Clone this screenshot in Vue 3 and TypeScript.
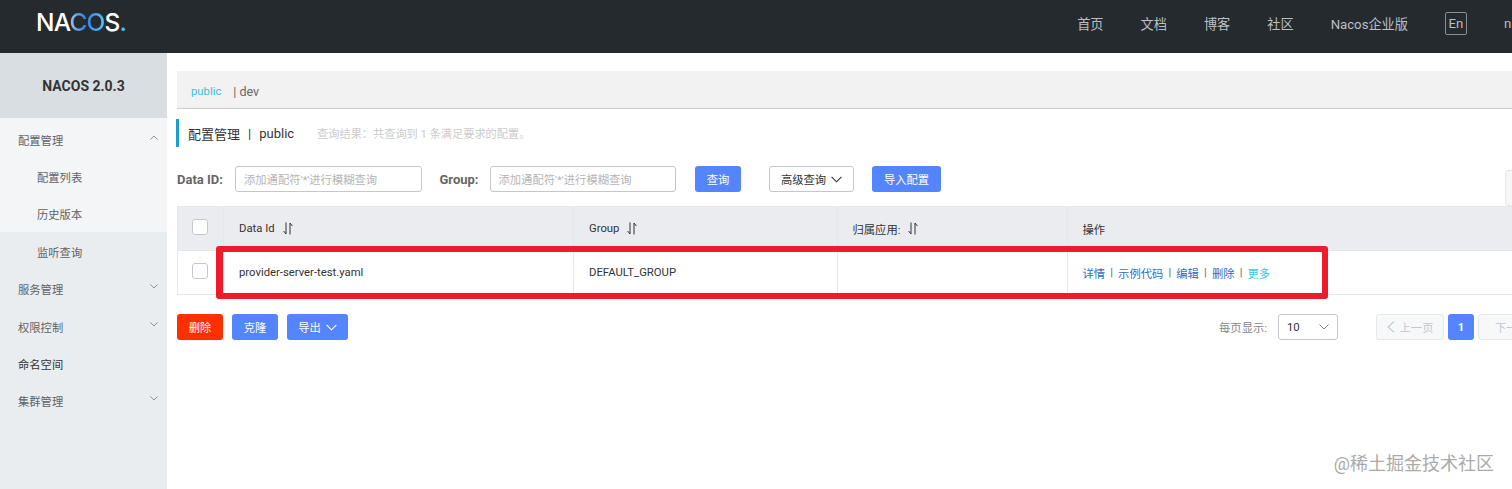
<script setup lang="ts">
// 顶部导航
const navItems = ['首页', '文档', '博客', '社区', 'Nacos企业版']

interface MenuItem {
  label: string
  arrow?: 'up' | 'down'
  dark?: boolean
}

const columns = [
  { label: 'Data Id', cls: 'col-id', sort: true },
  { label: 'Group', cls: 'col-group', sort: true },
  { label: '归属应用:', cls: 'col-app', sort: true },
  { label: '操作', cls: 'col-op', sort: false },
]

const actions = ['详情', '示例代码', '编辑', '删除']
const subItems = ['配置列表', '历史版本', '监听查询']
const lowerMenu: MenuItem[] = [
  { label: '服务管理', arrow: 'down' },
  { label: '权限控制', arrow: 'down' },
  { label: '命名空间', dark: true },
  { label: '集群管理', arrow: 'down' },
]
</script>

<template>
  <div class="page">
    <header class="topbar">
      <div class="logo">NA<span class="logo-mark">CO</span>S<span class="logo-dot">.</span></div>
      <nav class="nav">
        <span v-for="item in navItems" :key="item" class="nav-item">{{ item }}</span>
        <span class="lang">En</span>
        <span class="user">na</span>
      </nav>
    </header>

    <div class="body">
      <aside class="sidebar">
        <div class="side-title">NACOS 2.0.3</div>
        <div class="side-open">
          <div class="menu-row">
            <span>配置管理</span>
            <svg class="chev" width="8" height="5" viewBox="0 0 8 5"><path d="M.4 4.600 4 1l3.600 3.600" /></svg>
          </div>
          <div v-for="item in subItems" :key="item" class="menu-sub">{{ item }}</div>
        </div>
        <div v-for="item in lowerMenu" :key="item.label" class="menu-row" :class="{ dark: item.dark }">
          <span>{{ item.label }}</span>
          <svg v-if="item.arrow" class="chev" width="8" height="5" viewBox="0 0 8 5"><path d="M.4.400 4 4 7.600.400" /></svg>
        </div>
      </aside>

      <main class="main">
        <div class="ns-bar">
          <span class="ns-active">public</span>
          <span class="ns-other">| dev</span>
        </div>

        <div class="heading">
          <span class="heading-title">配置管理</span>
          <span class="heading-sep">|</span>
          <span class="heading-ns">public</span>
          <span class="heading-desc">查询结果：共查询到 1 条满足要求的配置。</span>
        </div>

        <div class="filters">
          <label class="filter-label">Data ID:</label>
          <div class="input">添加通配符'*'进行模糊查询</div>
          <label class="filter-label group-label">Group:</label>
          <div class="input">添加通配符'*'进行模糊查询</div>
          <button class="btn primary query">查询</button>
          <button class="btn outline advanced">
            高级查询
            <svg class="btn-chev" width="11" height="7" viewBox="0 0 11 7"><path d="M.6.800 5.500 5.800 10.400.800" /></svg>
          </button>
          <button class="btn primary import">导入配置</button>
          <span class="stub"></span>
        </div>

        <div class="table-wrap">
          <div class="t-row t-head">
            <div class="cell col-check"><span class="check"></span></div>
            <div v-for="col in columns" :key="col.label" class="cell" :class="col.cls">
              {{ col.label }}
              <svg v-if="col.sort" class="sort" width="10" height="13" viewBox="0 0 10 13">
                <path d="M3 .500v11.500M3 12 .6 9M7 12.500V1M7 1l2.400 3" />
              </svg>
            </div>
          </div>
          <div class="t-row t-data">
            <div class="cell col-check"><span class="check"></span></div>
            <div class="cell col-id">provider-server-test.yaml</div>
            <div class="cell col-group">DEFAULT_GROUP</div>
            <div class="cell col-app"></div>
            <div class="cell col-op">
              <template v-for="a in actions" :key="a">
                <a class="link">{{ a }}</a><span class="op-sep">|</span>
              </template>
              <a class="link more">更多</a>
            </div>
          </div>
          <div class="highlight"></div>
        </div>

        <div class="footer">
          <button class="btn danger">删除</button>
          <button class="btn primary clone">克隆</button>
          <button class="btn primary export">
            导出
            <svg class="btn-chev" width="11" height="7" viewBox="0 0 11 7"><path d="M.6.800 5.500 5.800 10.400.800" /></svg>
          </button>
          <div class="pager">
            <span class="page-label">每页显示:</span>
            <div class="page-size">
              <span>10</span>
              <svg class="size-chev" width="10" height="6" viewBox="0 0 10 6"><path d="M.5.500 5 5 9.500.500" /></svg>
            </div>
            <button class="btn pg prev">
              <svg width="8" height="12" viewBox="0 0 8 12"><path d="M7 .6 1 6l6 5.400" /></svg>
              上一页
            </button>
            <button class="btn primary pg-num">1</button>
            <button class="btn pg next">下一页</button>
          </div>
        </div>
      </main>
    </div>

    <div class="watermark">@稀土掘金技术社区</div>
  </div>
</template>

<style>
html,
body {
  margin: 0;
  overflow: hidden;
}
</style>

<style scoped>
.page {
  position: relative;
  width: 1512px;
  height: 489px;
  overflow: hidden;
  background: #fff;
  font-family: Roboto, "Noto Sans CJK SC", sans-serif;
  font-size: 11.300px;
  color: #333;
}

.topbar {
  display: flex;
  justify-content: space-between;
  height: 53px;
  background: #252a2f;
  padding-left: 36px;
}

.logo {
  margin-top: 7px;
  font-family: Inter, sans-serif;
  font-size: 24.500px;
  font-weight: 500;
  letter-spacing: -0.800px;
  color: #fff;
}

.logo-mark {
  background: linear-gradient(90deg, #9cc4f2, #2f80e4 45%, #55c8ef);
  -webkit-background-clip: text;
  background-clip: text;
  color: transparent;
}

.logo-dot {
  color: #47c5e8;
}

.nav {
  display: flex;
  align-items: center;
  height: 46px;
  margin-right: -4px;
  color: #bcbfc2;
  font-size: 13.200px;
}

.nav-item {
  margin-right: 37px;
}

.lang {
  display: flex;
  align-items: center;
  justify-content: center;
  width: 22px;
  height: 23px;
  box-sizing: border-box;
  border: 1px solid #8a8e92;
  border-radius: 2px;
  margin-right: 37px;
}

.user {
  width: 12px;
  overflow: hidden;
}

.body {
  display: flex;
  height: 436px;
}

.sidebar {
  flex: none;
  width: 167px;
  background: #eaedf0;
  color: #5f6368;
}

.side-title {
  display: flex;
  align-items: center;
  justify-content: center;
  height: 65px;
  background: #d9dee3;
  color: #333;
  font-size: 14px;
  font-weight: 700;
}

.side-open {
  padding-top: 3px;
  background: linear-gradient(#f3f5f7 114px, #eaedf0 114px);
}

.menu-row {
  display: flex;
  align-items: center;
  justify-content: space-between;
  height: 37.400px;
  padding: 0 9px 0 18px;
}

.menu-row .chev {
  margin-top: -5px;
}

.menu-row.dark {
  color: #333;
}

.menu-sub {
  display: flex;
  align-items: center;
  height: 37.400px;
  padding-left: 37px;
}

.chev {
  fill: none;
  stroke: #8c9196;
  stroke-width: 1;
}

.main {
  flex: none;
  width: 1440px;
  padding: 18px 0 0 10px;
  box-sizing: border-box;
}

.ns-bar {
  display: flex;
  align-items: center;
  height: 38px;
  padding: 3px 0 0 14px;
  background: #f2f2f2;
  border-bottom: 1px solid #ccc;
  box-sizing: border-box;
}

.ns-active {
  color: #3bbfd9;
  margin-right: 12px;
}

.ns-other {
  font-size: 12.500px;
  color: #666;
}

.heading {
  display: flex;
  align-items: center;
  height: 28px;
  margin-top: 10px;
  margin-left: -1px;
  padding-left: 9px;
  border-left: 3px solid #209bd0;
}

.heading-title,
.heading-ns {
  font-size: 13px;
  color: #333;
}

.heading-sep {
  margin: 0 8px;
  font-size: 13px;
  color: #333;
}

.heading-desc {
  margin-left: 23px;
  font-size: 11.200px;
  color: #ccc;
}

.filters {
  display: flex;
  align-items: center;
  height: 26px;
  margin-top: 19px;
}

.filter-label {
  flex: none;
  width: 47px;
  margin-right: 11px;
  font-size: 13px;
  font-weight: 700;
  color: #666;
  white-space: nowrap;
}

.group-label {
  width: 39px;
  margin-left: 18px;
}

.input {
  display: flex;
  align-items: center;
  width: 186.500px;
  height: 26px;
  box-sizing: border-box;
  padding-left: 8px;
  border: 1px solid #c4c6cf;
  border-radius: 3px;
  color: #b5b5b5;
  white-space: nowrap;
}

.btn {
  display: inline-flex;
  align-items: center;
  justify-content: center;
  gap: 5px;
  height: 26px;
  padding: 0;
  border: 0;
  border-radius: 3px;
  font-family: inherit;
  font-size: 11.300px;
}

.primary {
  background: #5584ff;
  color: #fff;
}

.danger {
  width: 46px;
  background: #ff3000;
  color: #fff;
}

.outline {
  background: #fff;
  border: 1px solid #c4c6cf;
  color: #333;
}

.btn-chev {
  fill: none;
  stroke: currentColor;
  stroke-width: 1.100;
}

.query {
  width: 46px;
  margin-left: 19px;
}

.advanced {
  width: 85px;
  margin-left: 28px;
}

.import {
  width: 69px;
  margin-left: 18px;
}

.stub {
  flex: none;
  align-self: flex-start;
  width: 20px;
  height: 34px;
  margin: 4px 0 0 564px;
  background: #f7f7f7;
  border: 1px solid #e6e7eb;
  border-radius: 3px;
}

.table-wrap {
  position: relative;
  margin-top: 14px;
  width: 1500px;
  border: 1px solid #e6e7eb;
  box-sizing: border-box;
}

.t-row {
  display: flex;
}

.t-head {
  height: 43px;
  background: #ebecf0;
}

.t-data {
  height: 44px;
  border-top: 1px solid #e6e7eb;
  box-sizing: border-box;
}

.cell {
  display: flex;
  align-items: center;
  gap: 8px;
  box-sizing: border-box;
  padding-left: 15px;
  border-left: 1px solid #e6e7eb;
}

.col-check {
  width: 45px;
  justify-content: center;
  padding: 0 2px 0 0;
  border-left: 0;
}

.col-id {
  width: 350px;
}

.col-group {
  width: 263.500px;
}

.col-app {
  width: 230px;
}

.col-op {
  flex: 1;
  gap: 0;
}

.check {
  width: 14px;
  height: 14px;
  margin-bottom: 4px;
  background: #fff;
  border: 1px solid #c4c6cf;
  border-radius: 3px;
}

.sort {
  fill: none;
  stroke: #333;
  stroke-width: 1;
}

.link {
  color: #2a6fc9;
}

.link.more {
  color: #3bc8d8;
}

.op-sep {
  width: 13px;
  text-align: center;
  color: #666;
}

.highlight {
  position: absolute;
  left: 37.500px;
  top: 38.500px;
  width: 1112.500px;
  height: 53px;
  box-sizing: border-box;
  border: 6px solid #ee1c2b;
  border-left-width: 7px;
  border-radius: 3px;
}

.footer {
  display: flex;
  align-items: center;
  width: 1335px;
  margin-top: 19px;
}

.clone {
  width: 46px;
  margin-left: 9px;
}

.export {
  width: 61px;
  margin-left: 9px;
}

.pager {
  display: flex;
  align-items: center;
  margin-left: auto;
  margin-right: -34px;
}

.page-label {
  color: #888;
  margin-right: 11px;
}

.page-size {
  display: flex;
  align-items: center;
  justify-content: space-between;
  width: 60px;
  height: 26px;
  box-sizing: border-box;
  padding: 0 8px;
  border: 1px solid #c4c6cf;
  border-radius: 3px;
}

.size-chev {
  fill: none;
  stroke: #888;
  stroke-width: 1;
}

.pg {
  width: 68px;
  background: #f7f8fa;
  border: 1px solid #e6e7eb;
  color: #c4c6cf;
}

.pg svg {
  fill: none;
  stroke: #c4c6cf;
  stroke-width: 1.100;
}

.prev {
  margin-left: 38px;
}

.pg-num {
  width: 26px;
  margin: 0 4px;
  font-weight: 700;
}

.watermark {
  position: absolute;
  right: 18px;
  bottom: 14px;
  font-size: 18px;
  color: #aaa;
}
</style>
